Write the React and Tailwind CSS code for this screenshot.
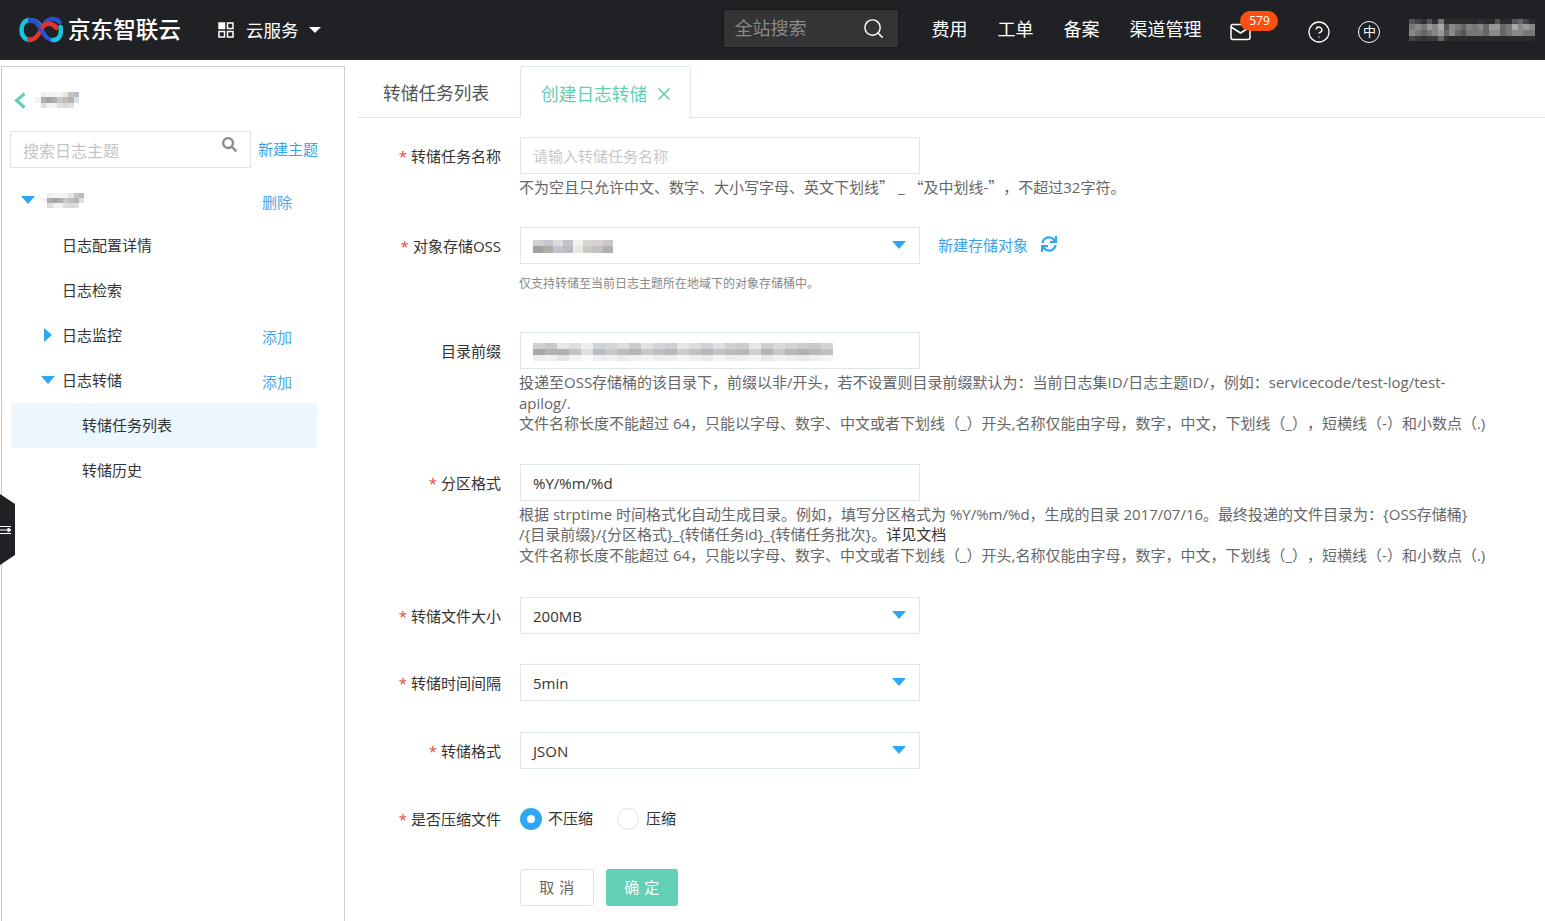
import React from "react";
import { Search, X, HelpCircle } from "lucide-react";
import { FaSearch, FaSync } from "react-icons/fa";

const font = "font-['Open_Sans','Noto_Sans_CJK_SC',sans-serif] [text-spacing-trim:space-all]";

// pixelated blocks standing in for the masked names
const Mosaic = ({ rows, size = 6, h }) => (
  <div className="flex flex-col">
    {rows.map((row, i) => (
      <div key={i} className="flex">
        {row.map((c, j) => (
          <span key={j} style={{ width: size, height: h || size, background: c }} />
        ))}
      </div>
    ))}
  </div>
);

const nameRows = [
  ["#fff", "#eee", "#f4f4f4", "#f4f4f4", "#f4f4f4", "#e8e4e0", "#c8c4c4", "#b8bcc4"],
  ["#f4f4f4", "#b0aeb0", "#a4a4a8", "#b0b0b0", "#c8c8cc", "#c4bcb4", "#b0b4bc", "#dde0e4"],
  ["#fff", "#dcdcdc", "#f0f0f0", "#f0f0f0", "#dddddd", "#d8d8d8", "#e0e0e4", "#fff"],
];

const ossRows = [
  ["#d0d0d4", "#c8c8cc", "#dcdcdc", "#c0c4c8", "#f0f0f0", "#d8d4d0", "#d8d0d0", "#c8c8c8"],
  ["#a0a0a4", "#b0aca8", "#c4c4c8", "#b8bcc0", "#e8e8e8", "#d0c8c0", "#c4c0c0", "#b0b0b4"],
];

const prefixRows = [
  ["#d0d0d0", "#c8c8c8", "#e8e8e8", "#dedede", "#eeeeee", "#cfd2d6", "#d5d5d5", "#dddddd", "#cccccc", "#e2e2e2", "#d4d4d8", "#cfcfcf", "#e5e5e5", "#dddddd", "#cfd0d4", "#e0e0e0", "#d0d0d0", "#cccccc", "#e6e6e6", "#cfcfcf", "#dadada", "#d2d2d2", "#cccccc", "#c8c8c8", "#d4d4d4"],
  ["#a8a8a8", "#b4b4b4", "#b0b0b0", "#c4c4c4", "#e0e0e0", "#b8bcc0", "#c8c8c8", "#bcbcbc", "#b4b4b4", "#c8c8c8", "#bcc0c4", "#b8b8b8", "#cccccc", "#c0c0c0", "#b4b8bc", "#c4c4c4", "#bcbcbc", "#b8b8b8", "#d0d0d0", "#b4b4b4", "#c8c8c8", "#b8b8b8", "#b0b0b0", "#b8b8b8", "#c0c0c0"],
  ["#eeeeee", "#f0f0f0", "#e4e4e4", "#f4f4f4", "#fafafa", "#eeeeee", "#f0f0f0", "#eaeaea", "#f0f0f0", "#f4f4f4", "#eeeeee", "#eeeeee", "#f4f4f4", "#eeeeee", "#eaeaea", "#f4f4f4", "#eeeeee", "#f0f0f0", "#f4f4f4", "#e8e8e8", "#f0f0f0", "#eeeeee", "#eaeaea", "#f0f0f0", "#f4f4f4"],
];

const userRows = [
  ["#555", "#444", "#333", "#555", "#2c2c2e", "#777", "#2c2c2e", "#2a2a2c", "#2a2a2c", "#2a2a2c", "#2a2a2c", "#2a2a2c", "#333", "#2a2a2c", "#2a2a2c", "#555", "#2a2a2c", "#2a2a2c", "#555", "#666", "#444", "#2c2c2e"],
  ["#777", "#888", "#777", "#999", "#888", "#aaa", "#555", "#888", "#777", "#666", "#808088", "#777", "#888", "#666", "#a09890", "#999", "#666", "#777", "#aaa", "#888", "#999", "#888"],
  ["#888", "#777", "#666", "#777", "#888", "#999", "#666", "#8a8a90", "#666", "#555", "#777", "#777", "#777", "#666", "#888", "#888", "#666", "#777", "#888", "#888", "#777", "#777"],
  ["#444", "#3a3a3c", "#333", "#3a3a3c", "#3a3a3c", "#666", "#333", "#2a2a2c", "#2a2a2c", "#2a2a2c", "#2a2a2c", "#2a2a2c", "#2a2a2c", "#2a2a2c", "#2a2a2c", "#2a2a2c", "#2a2a2c", "#2a2a2c", "#2a2a2c", "#2a2a2c", "#2a2a2c", "#2a2a2c"],
];

const Logo = () => (
  <svg width="44" height="28" viewBox="0 0 44 28" fill="none" strokeWidth="4.5">
    <path d="M21 9.500C17.500 5 14 4 10.500 4 5.500 4 2.500 8.500 2.500 14s3.500 10 8.500 10" stroke="#19c4e0" strokeLinecap="round" />
    <path d="M10 24c6 0 9-4 11.500-9" stroke="#e2332d" strokeLinecap="round" />
    <path d="M11 4c5.500 0 9 5 11.500 10 3 5.500 6 10 11 10" stroke="#2a4fd0" strokeLinecap="round" />
    <path d="M22 14c3-6 6-11 12-11 3 0 5 1 6.500 3" stroke="#2a4fd0" strokeLinecap="round" />
    <path d="M23.500 11c2.500-3 5-3.500 8-3 3.500.5 5 2.500 6 4" stroke="#e2332d" strokeLinecap="round" />
    <path d="M34 24c5.500 0 8-4.500 8-10 0-1-.2-2-.4-3" stroke="#19c4e0" strokeLinecap="round" />
  </svg>
);

const CaretDown = () => (
  <span className="block w-0 h-0 border-l-[7px] border-r-[7px] border-t-[8px] border-l-transparent border-r-transparent border-t-[#2ea8f5]" />
);

const TreeRow = ({ indent, caret, children, action, active }) => (
  <div className={`relative flex items-center h-[45px] text-[15px] text-[#333] ${active ? "bg-[#ebf6fe]" : ""}`}>
    {caret === "down" && (
      <span className="absolute left-[30px] top-[18px]">
        <CaretDown />
      </span>
    )}
    {caret === "right" && (
      <span className="absolute left-[33px] top-[15px] block w-0 h-0 border-t-[7px] border-b-[7px] border-l-[8px] border-t-transparent border-b-transparent border-l-[#2ea8f5]" />
    )}
    <span className={indent}>{children}</span>
    {action && <span className="ml-auto mr-[25px] mt-[3px] text-[#4aa8ea]">{action}</span>}
  </div>
);

const Sidebar = () => (
  <aside className="relative ml-px w-[344px] h-[860px] shrink-0 border border-[#ccc] bg-white">
    <div className="flex items-center h-[64px] pt-[2px] pl-[12px]">
      <svg width="12" height="17" viewBox="0 0 12 17" fill="none" stroke="#62d0b4" strokeWidth="3">
        <path d="M10.500 1.500 2.500 8.500l8 7" />
      </svg>
      <div className="ml-[9px]">
        <Mosaic rows={nameRows} size={5.5} />
      </div>
    </div>
    <div className="flex items-start pl-[8px]">
      <div className="flex w-[241px] h-[37px] border border-[#dde3e8]">
        <span className="pl-[12px] pt-[9px] text-[16px] leading-[20px] text-[#c4c4c4]">搜索日志主题</span>
        <FaSearch className="ml-auto mr-[13px] mt-[5px] w-[15px] h-[15px] text-[#8e8e8e]" />
      </div>
      <span className="ml-[7px] mt-[8px] text-[15px] leading-[20px] text-[#38a4ea]">新建主题</span>
    </div>
    <div className="mt-[10px] ml-[9px] w-[306px]">
      <div className="relative flex items-center h-[45px] text-[15px]">
        <span className="absolute left-[10px] top-[18px]">
          <CaretDown />
        </span>
        <span className="ml-[31px]">
          <Mosaic rows={nameRows} size={5.25} />
        </span>
        <span className="ml-auto mr-[25px] mt-[3px] text-[#4aa8ea]">删除</span>
      </div>
      <TreeRow indent="ml-[51px]">日志配置详情</TreeRow>
      <TreeRow indent="ml-[51px]">日志检索</TreeRow>
      <TreeRow indent="ml-[51px]" caret="right" action="添加">日志监控</TreeRow>
      <TreeRow indent="ml-[51px]" caret="down" action="添加">日志转储</TreeRow>
      <TreeRow indent="ml-[71px]" active>转储任务列表</TreeRow>
      <TreeRow indent="ml-[71px]">转储历史</TreeRow>
    </div>
    {/* collapse handle sits over the sidebar edge */}
    <div className="absolute left-[-2px] top-[427px] flex items-center w-[15px] h-[71px] bg-[#202124] [clip-path:polygon(0_0,100%_14%,100%_86%,0_100%)]">
      <svg width="12" height="12" viewBox="0 0 12 12" fill="none" stroke="#fff" strokeWidth="1">
        <path d="M0 2.500h11M0 9.500h11M0 6h9" />
        <path d="M8 4v4l3-2z" fill="#fff" />
      </svg>
    </div>
  </aside>
);

const Label = ({ required, children }) => (
  <div className="w-[144px] shrink-0 h-[37px] pt-[2px] pr-[19px] flex items-center justify-end text-[15px] text-[#333]">
    {required && <span className="mr-[4px] text-[#e8473f]">*</span>}
    {children}
  </div>
);

const Box = ({ children, caret }) => (
  <div className="relative w-[400px] h-[37px] shrink-0 flex items-center pt-[2px] pl-[12px] border border-[#dde6e8] bg-white text-[15px] text-[#333]">
    {children}
    {caret && (
      <span className="absolute right-[13px] top-[13px]">
        <CaretDown />
      </span>
    )}
  </div>
);

const Help = ({ children, className = "" }) => (
  <div className={`ml-[143px] leading-[20.5px] ${className}`}>{children}</div>
);

// full-width quote marks come from the CJK face
const Q = ({ children }) => <span className="font-['Noto_Sans_CJK_SC',sans-serif]">{children}</span>;

const FileRule = () => (
  <div>文件名称长度不能超过 64，只能以字母、数字、中文或者下划线（_）开头,名称仅能由字母，数字，中文，下划线（_），短横线（-）和小数点（.)</div>
);

const SelectRow = ({ label, value, className }) => (
  <div className={`flex ${className}`}>
    <Label required>{label}</Label>
    <Box caret>{value}</Box>
  </div>
);

const Form = () => (
  <div className="pl-[19px] pr-[50px]">
    <div className="flex mt-[19px]">
      <Label required>转储任务名称</Label>
      <Box>
        <span className="text-[#c8c8c8]">请输入转储任务名称</span>
      </Box>
    </div>
    <Help className="mt-[3px] text-[15px] text-[#666]">不为空且只允许中文、数字、大小写字母、英文下划线<Q>”</Q> _ <Q>“</Q>及中划线-<Q>”</Q>，不超过32字符。</Help>

    <div className="flex items-center mt-[29px]">
      <Label required>对象存储OSS</Label>
      <Box caret>
        <Mosaic rows={ossRows} size={10} h={6.5} />
      </Box>
      <span className="ml-[18px] text-[15px] text-[#38a4ea]">新建存储对象</span>
      <FaSync className="ml-[13px] mb-[3px] w-[16px] h-[16px] text-[#2ea8f5]" />
    </div>
    <Help className="mt-[10px] text-[12px] text-[#888]">仅支持转储至当前日志主题所在地域下的对象存储桶中。</Help>

    <div className="flex mt-[38px]">
      <Label>目录前缀</Label>
      <Box>
        <Mosaic rows={prefixRows} size={12} h={6} />
      </Box>
    </div>
    <Help className="mt-[3px] text-[15px] text-[#666]">
      <div>投递至OSS存储桶的该目录下，前缀以非/开头，若不设置则目录前缀默认为：当前日志集ID/日志主题ID/，例如：servicecode/test-log/test-apilog/.</div>
      <FileRule />
    </Help>

    <div className="flex mt-[30px]">
      <Label required>分区格式</Label>
      <Box>%Y/%m/%d</Box>
    </div>
    <Help className="mt-[3px] text-[15px] text-[#666]">
      <div>根据 strptime 时间格式化自动生成目录。例如，填写分区格式为 %Y/%m/%d，生成的目录 2017/07/16。最终投递的文件目录为：{"{OSS存储桶}"} /{"{目录前缀}"}/{"{分区格式}"}_{"{转储任务id}"}_{"{转储任务批次}"}。<span className="text-[#333]">详见文档</span></div>
      <FileRule />
    </Help>

    <SelectRow label="转储文件大小" value="200MB" className="mt-[32px]" />
    <SelectRow label="转储时间间隔" value="5min" className="mt-[30px]" />
    <SelectRow label="转储格式" value="JSON" className="mt-[31px]" />

    <div className="flex items-center mt-[31px]">
      <Label required>是否压缩文件</Label>
      <span className="w-[22px] h-[22px] rounded-full border-[7px] border-[#2ea8f5] bg-white" />
      <span className="ml-[6px] text-[15px] text-[#333]">不压缩</span>
      <span className="ml-[24px] w-[22px] h-[22px] rounded-full border border-[#dde3e8] bg-white" />
      <span className="ml-[7px] text-[15px] text-[#333]">压缩</span>
    </div>

    <div className="flex ml-[144px] mt-[32px] gap-[12px]">
      <button className="w-[74px] h-[37px] rounded-[3px] border border-[#dde3e8] bg-white text-[15px] tracking-[0.5px] text-[#666]">取 消</button>
      <button className="w-[72px] h-[37px] rounded-[3px] bg-[#62d0b4] text-[15px] tracking-[0.5px] text-white">确 定</button>
    </div>
  </div>
);

export default function App() {
  return (
    <div className={`h-[921px] overflow-hidden bg-white ${font}`}>
      <header className="flex items-center h-[60px] bg-[#202124] text-white">
        <div className="ml-[19px]">
          <Logo />
        </div>
        <span className="ml-[5px] text-[22.6px] font-medium">京东智联云</span>
        <svg className="ml-[37px]" width="16" height="16" viewBox="0 0 16 16" fill="none" stroke="#fff" strokeWidth="1.500">
          <rect x="1" y="1" width="5.500" height="5.500" fill="#fff" />
          <rect x="9.500" y="1" width="5.500" height="5.500" />
          <rect x="1" y="9.500" width="5.500" height="5.500" />
          <rect x="9.500" y="9.500" width="5.500" height="5.500" />
        </svg>
        <span className="ml-[12px] text-[17.5px]">云服务</span>
        <span className="ml-[11px] w-0 h-0 border-l-[6px] border-r-[6px] border-t-[6px] border-l-transparent border-r-transparent border-t-white" />

        <div className="ml-[402px] mb-[3px] flex items-center w-[176px] h-[39px] pl-[10px] bg-[#333436] border border-[#18191a]">
          <span className="text-[18px] text-[#8a8a8a]">全站搜索</span>
          <Search className="ml-auto mr-[13px] w-[23px] h-[23px] text-white" strokeWidth={1.5} />
        </div>
        <nav className="ml-[32px] mb-[2px] flex text-[18px]">
          <span>费用</span>
          <span className="ml-[30px]">工单</span>
          <span className="ml-[30px]">备案</span>
          <span className="ml-[30px]">渠道管理</span>
        </nav>
        <div className="relative ml-[29px] mt-[4px]">
          <svg width="21" height="18" viewBox="0 0 21 18" fill="none" stroke="#fff" strokeWidth="1.500">
            <rect x="1" y="1.500" width="19" height="15" rx="2" />
            <path d="M1 4l9.500 6L20 4" />
          </svg>
          <span className="absolute left-[10px] top-[-12px] flex items-center justify-center w-[38px] h-[20px] rounded-full bg-[#fa4f0f] text-[12px] text-white">579</span>
        </div>
        <HelpCircle className="ml-[56px] mt-[3px] w-[24px] h-[24px] text-white" strokeWidth={1.3} />
        <div className="ml-[27px] mt-[3px] flex items-center justify-center w-[22px] h-[22px] rounded-full border-[1.5px] border-white text-[13px] leading-none">中</div>
        <div className="ml-[29px]">
          <Mosaic rows={userRows} size={5.7} />
        </div>
      </header>

      <div className="flex pt-[6px]">
        <Sidebar />
        <main className="flex-1 ml-[12px]">
          <div className="flex items-end h-[52px] border-b border-[#dde6e8]">
            <span className="w-[163px] h-[51px] pl-[26px] pt-[14px] text-[17.7px] leading-[26px] text-[#555]">转储任务列表</span>
            <div className="flex items-start w-[171px] h-[52px] -mb-px pl-[20px] pt-[14px] border border-b-0 border-[#dde6e8] rounded-t-[4px] bg-white">
              <span className="text-[17.7px] leading-[26px] text-[#62d0b4]">创建日志转储</span>
              <X className="ml-[7px] mt-[3px] w-[20px] h-[20px] text-[#62d0b4]" strokeWidth={2} />
            </div>
          </div>
          <Form />
        </main>
      </div>
    </div>
  );
}
